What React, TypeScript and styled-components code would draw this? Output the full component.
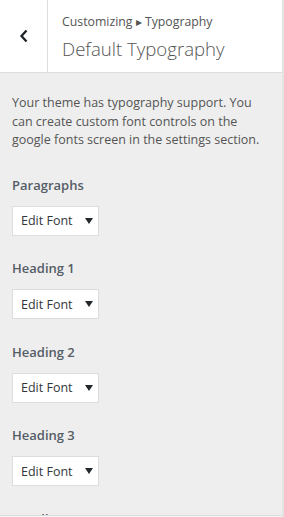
import React from "react";
import styled, { createGlobalStyle } from "styled-components";

const Global = createGlobalStyle`
  html, body { margin: 0; padding: 0; background: #eee; }
  body { font-family: "Open Sans", "Noto Sans", sans-serif; -webkit-font-smoothing: antialiased; }
  * { box-sizing: border-box; }
`;

const Panel = styled.div`
  width: 284px;
  height: 517px;
  display: flex;
  flex-direction: column;
  background: #eee;
  overflow: hidden;
  border-right: 2px solid #e4e4e4;
`;

const Header = styled.header`
  display: flex;
  height: 73px;
  flex: none;
  background: #fff;
  border-bottom: 1px solid #ddd;
`;

const BackButton = styled.button`
  width: 48px;
  flex: none;
  border: none;
  border-right: 1px solid #ddd;
  background: #fff;
  display: flex;
  align-items: center;
  justify-content: center;
  padding: 0;
  color: #1e2327;
`;

const Titles = styled.div`
  display: flex;
  flex-direction: column;
  padding: 13px 0 0 14px;
  color: #555;
`;

const Crumb = styled.span`
  font-size: 12.3px;
  line-height: 18px;
`;

const Title = styled.h1`
  margin: 4px 0 0;
  font-size: 18.6px;
  font-weight: 300;
  line-height: 28px;
`;

const Body = styled.div`
  flex: 1;
  overflow: hidden;
  padding: 21px 12px 0;
`;

const Description = styled.p`
  margin: 0 0 25px;
  font-size: 12.5px;
  line-height: 18.5px;
  color: #555;
`;

const Control = styled.div`
  display: flex;
  flex-direction: column;
  align-items: flex-start;
  margin-bottom: 22.5px;
`;

const Label = styled.span`
  font-size: 13px;
  font-weight: 600;
  line-height: 20px;
  color: #555d66;
  margin-bottom: 11px;
`;

const Select = styled.button`
  display: flex;
  align-items: center;
  width: 87px;
  height: 30px;
  padding: 0 0 0 8px;
  background: #fff;
  border: 1px solid #ddd;
  font-family: inherit;
  font-size: 12.5px;
  color: #32373c;
  gap: 12px;
`;

const Footer = styled.div`
  height: 2px;
  flex: none;
  border-top: 1px solid #ddd;
  background: #f5f5f5;
`;

const Chevron = () => (
  <svg width="10" height="14" viewBox="0 0 10 14">
    <path d="M7.5 1.5 L2.5 7 L7.5 12.5" fill="none" stroke="currentColor" strokeWidth="2.3" />
  </svg>
);

const Caret = () => (
  <svg width="8" height="6" viewBox="0 0 8 6">
    <path d="M0 0 H8 L4 6 Z" fill="#23282d" />
  </svg>
);

const items = ["Paragraphs", "Heading 1", "Heading 2", "Heading 3", "Heading 4"];

export default function App() {
  return (
    <>
      <Global />
      <Panel>
        <Header>
          <BackButton aria-label="Back">
            <Chevron />
          </BackButton>
          <Titles>
            <Crumb>Customizing ▸ Typography</Crumb>
            <Title>Default Typography</Title>
          </Titles>
        </Header>
        <Body>
          <Description>
            Your theme has typography support. You can create custom font controls on the google fonts screen in the settings section.
          </Description>
          {items.map((label) => (
            <Control key={label}>
              <Label>{label}</Label>
              <Select>
                Edit Font <Caret />
              </Select>
            </Control>
          ))}
        </Body>
        <Footer />
      </Panel>
    </>
  );
}
